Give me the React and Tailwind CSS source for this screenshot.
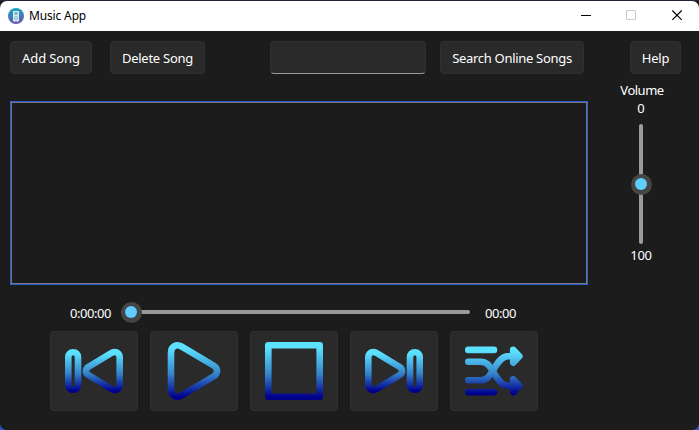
import React from 'react';

const SKIP = 'M69.7 26.5 V53.5 C69.7 58 65.5 60.3 61.8 58.2 L38.3 44 C35.2 42.1 35.2 37.9 38.3 36 L61.8 21.8 C65.5 19.7 69.7 22 69.7 26.5 Z';

function Button({ className, children }) {
  return (
    <button className={`flex shrink-0 items-center justify-center whitespace-nowrap rounded-[4px] border border-[#303030] bg-[#2a2a2a] ${className}`}>
      {children}
    </button>
  );
}

function Icon({ id, top, bottom, children }) {
  return (
    <svg className="-m-px h-20 w-[88px] shrink-0" viewBox="0 0 88 80" fill="none" stroke={`url(#${id})`} strokeWidth="6.6" strokeLinecap="round" strokeLinejoin="round">
      <defs>
        <linearGradient id={id} gradientUnits="userSpaceOnUse" x1="0" y1={top} x2="0" y2={bottom}>
          <stop offset="0.1" stopColor="#5ce1ff" />
          <stop offset="0.55" stopColor="#3684cb" />
          <stop offset="0.95" stopColor="#00008b" />
        </linearGradient>
      </defs>
      {children}
    </svg>
  );
}

function Thumb({ className }) {
  return (
    <div className={`absolute flex h-[21px] w-[21px] items-center justify-center rounded-full bg-[#454545] ${className}`}>
      <div className="h-3 w-3 rounded-full bg-[#60cdff]" />
    </div>
  );
}

function TitleBar() {
  return (
    <header className="flex h-[30px] shrink-0 items-center rounded-t-[7px] bg-white pl-2 text-black">
      <svg className="h-4 w-4" viewBox="0 0 16 16">
        <defs>
          <linearGradient id="logo" x1="0" y1="0" x2="0.2" y2="1">
            <stop offset="0.1" stopColor="#18a8bd" />
            <stop offset="1" stopColor="#6856ae" />
          </linearGradient>
        </defs>
        <circle cx="8" cy="8" r="8" fill="url(#logo)" />
        <rect x="5" y="3" width="6" height="10.5" rx="0.5" fill="#d5eaf5" />
        <rect x="6.4" y="4.2" width="3.2" height="2.5" fill="#64acd0" />
        <circle cx="8" cy="10" r="1.5" fill="none" stroke="#64acd0" strokeWidth="0.8" />
      </svg>
      <span className="ml-[5px] text-[12px] tracking-[-0.15px]">Music App</span>
      <svg className="ml-auto h-[30px] w-[137px]" viewBox="0 0 137 30" fill="none">
        <path d="M19 14.5H29" stroke="#000" />
        <rect x="64.5" y="9.5" width="9" height="9" rx="0.5" stroke="#cacaca" />
        <path d="M110.3 9.5L119.7 18.9M119.7 9.5L110.3 18.9" stroke="#000" strokeWidth="1.1" />
      </svg>
    </header>
  );
}

export default function App() {
  return (
    <div className="h-[430px] w-[699px] overflow-hidden bg-[linear-gradient(to_bottom,#20253c_0px,#20253c_30px,#2855b5_31px)] pt-px font-['Noto_Sans','Open_Sans',sans-serif] text-[13px] leading-[18px] text-white">
      <div className="flex h-[429px] flex-col overflow-hidden rounded-b-[7px] border-b border-[#21191c] bg-[#1c1c1c]">
        <TitleBar />
        <div className="mt-[10px] flex h-[33px] shrink-0 pl-[10px]">
          <Button className="h-[33px] w-[82px] tracking-[-0.1px]">Add Song</Button>
          <Button className="ml-[18px] h-[33px] w-[95px] tracking-[-0.25px]">Delete Song</Button>
          <input className="ml-[65px] h-[33px] w-[156px] rounded-[4px] border border-[#303030] border-b-[#9a9a9a] bg-[#2a2a2a] px-2 outline-none" />
          <Button className="ml-[14px] h-[33px] w-[144px] tracking-[-0.3px]">Search Online Songs</Button>
          <Button className="ml-[46px] h-[33px] w-[51px] tracking-[-0.25px]">Help</Button>
        </div>
        <div className="flex h-[227px] shrink-0 pl-[10px]">
          <div className="mt-[27px] h-[184px] w-[578px] border border-[#2b5fd9]">
            <div className="h-full border border-[#777777]" />
          </div>
          <div className="ml-[23px] flex w-[60px] flex-col items-center pt-[7px]">
            <span className="pl-[2px] tracking-[-0.5px]">Volume</span>
            <span>0</span>
            <div className="relative mt-[7px] h-[120px] w-1 rounded-full bg-[#9a9a9a]">
              <Thumb className="left-[-8.5px] top-[49.5px]" />
            </div>
            <span className="mt-[2px] tracking-[-0.3px]">100</span>
          </div>
        </div>
        <div className="flex h-[22px] shrink-0 items-center pl-[70px]">
          <span className="mt-px w-[51px] tracking-[-0.45px]">0:00:00</span>
          <div className="relative h-1 w-[349px] rounded-full bg-[#9a9a9a]">
            <Thumb className="left-[-0.5px] top-[-8.5px]" />
          </div>
          <span className="ml-[15px] mt-px tracking-[-0.45px]">00:00</span>
        </div>
        <div className="mt-2 flex gap-3 pl-[50px]">
          <Button className="h-20 w-[88px]">
            <Icon id="previous" top="18" bottom="62">
              <rect x="18.3" y="21.3" width="9.7" height="37.4" rx="4.7" />
              <path d={SKIP} />
            </Icon>
          </Button>
          <Button className="h-20 w-[88px]">
            <Icon id="play" top="11" bottom="69">
              <path d="M21 21.5 C21 15.6 26.5 12.6 31.3 15.4 L63.5 34.5 C68.2 37.3 68.2 42.7 63.5 45.5 L31.3 64.6 C26.5 67.4 21 64.4 21 58.5 Z" />
            </Icon>
          </Button>
          <Button className="h-20 w-[88px]">
            <Icon id="stop" top="11" bottom="69">
              <rect x="18.3" y="14.3" width="51.4" height="51.4" />
            </Icon>
          </Button>
          <Button className="h-20 w-[88px]">
            <Icon id="next" top="18" bottom="62">
              <g transform="translate(88 0) scale(-1 1)">
                <rect x="18.3" y="21.3" width="9.7" height="37.4" rx="4.7" />
                <path d={SKIP} />
              </g>
            </Icon>
          </Button>
          <Button className="h-20 w-[88px]">
            <Icon id="shuffle" top="15" bottom="65">
              <path d="M18.3 18.9 H44 V18.91 M18.3 61.1 H44 V61.11" />
              <path d="M18.3 30.7 H30.5 C37 30.7 39.5 35 42.7 40 S50.5 54.7 58 54.7 H65" />
              <path d="M18.3 49.3 H30.5 C37 49.3 39.5 45 42.7 40 S50.5 25.3 58 25.3 H65" />
              <path fill="url(#shuffle)" d="M63.2 18.9 L69.4 25.3 L63.2 31.7 V28 H66 V23 H63.2 Z M63.2 48.3 L69.4 54.7 L63.2 61.1 V57 H66 V52 H63.2 Z" />
            </Icon>
          </Button>
        </div>
      </div>
    </div>
  );
}
